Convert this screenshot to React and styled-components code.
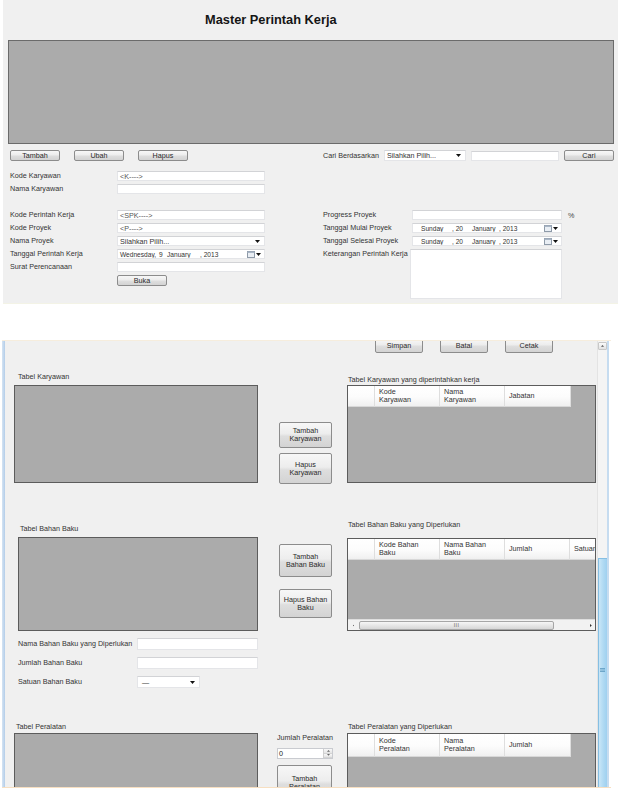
import React from 'react';
import styled, { createGlobalStyle } from 'styled-components';

const Global = createGlobalStyle`
  html, body { margin: 0; padding: 0; background: #fff; }
  body {
    font-family: "Liberation Sans", Arial, sans-serif;
    font-size: 7.2px;
    color: #2a2a2a;
  }
  * { box-sizing: border-box; }
`;

const Page = styled.div`
  width: 618px;
  height: 798px;
  overflow: hidden;
  background: #fff;
  display: flex;
  flex-direction: column;
`;

/* ---------- top screenshot ---------- */
const TopForm = styled.div`
  margin-left: 3px;
  width: 615px;
  height: 304px;
  flex-shrink: 0;
  background: #f0f0f0;
  border-bottom: 1px solid #f3f3e6;
  display: flex;
  flex-direction: column;
  overflow: hidden;
`;

const Title = styled.div`
  height: 40px;
  line-height: 40px;
  padding-left: 202px;
  font-size: 12.8px;
  font-weight: bold;
  color: #151515;
`;

const Banner = styled.div`
  margin-left: 5px;
  width: 606px;
  height: 104px;
  background: #ababab;
  border: 1px solid #6b6b6b;
`;

const FormBody = styled.div`
  display: flex;
  padding-left: 7px;
`;

const Column = styled.div`
  display: flex;
  flex-direction: column;
  width: ${(p) => p.$w}px;
  margin-left: ${(p) => p.$ml || 0}px;
`;

const ButtonRow = styled.div`
  display: flex;
  align-items: center;
  gap: ${(p) => p.$gap}px;
  margin-top: ${(p) => p.$mt || 0}px;
  margin-left: ${(p) => p.$ml || 0}px;
  height: ${(p) => p.$h}px;
`;

const Btn = styled.div`
  width: ${(p) => p.$w}px;
  height: ${(p) => p.$h}px;
  flex-shrink: 0;
  border: 1px solid #8c8c8c;
  border-radius: 2px;
  background: linear-gradient(#f7f7f7, #ededed 45%, #dedede 55%, #d3d3d3);
  display: flex;
  align-items: center;
  justify-content: center;
  text-align: center;
  line-height: 8px;
  color: #2a2a2a;
`;

const Group = styled.div`
  display: flex;
  flex-direction: column;
  gap: ${(p) => p.$gap}px;
  margin-top: ${(p) => p.$mt || 0}px;
`;

const Field = styled.div`
  display: grid;
  grid-template-columns: ${(p) => p.$label}px ${(p) => p.$ctrl}px auto;
  align-items: center;
  height: ${(p) => p.$h || 10}px;
`;

const Label = styled.div`
  line-height: 10px;
  white-space: nowrap;
  color: #333;
  padding-left: ${(p) => p.$pl || 0}px;
  align-self: ${(p) => (p.$top ? 'start' : 'auto')};
`;

const TextBox = styled.div`
  height: ${(p) => (p.$h ? `${p.$h}px` : '100%')};
  width: ${(p) => (p.$w ? `${p.$w}px` : 'auto')};
  flex-shrink: 0;
  background: #fff;
  border: 1px solid #e4e5e8;
  border-top-color: #d2d3d6;
  padding-left: 2px;
  display: flex;
  align-items: center;
  white-space: nowrap;
  overflow: hidden;
  color: #555;
`;

const Combo = styled(TextBox)`
  justify-content: space-between;
  padding-right: 4px;
  color: #333;
`;

const DateBox = styled(TextBox)`
  padding-right: 3px;
  color: #333;
  font-size: 6.6px;
`;

const Seg = styled.span`
  display: inline-block;
  width: ${(p) => p.$w}px;
  flex-shrink: 0;
`;

const DateIcons = styled.div`
  margin-left: auto;
  display: flex;
  align-items: center;
  gap: 1px;
`;

const Percent = styled.span`
  padding-left: 6px;
  color: #444;
`;

const Caret = () => (
  <svg width="5" height="3" viewBox="0 0 5 3">
    <path d="M0 0H5L2.5 3Z" fill="#111" />
  </svg>
);

const CalIcon = () => (
  <svg width="8" height="7" viewBox="0 0 8 7">
    <rect x="0.5" y="0.5" width="7" height="6" fill="#e9eef4" stroke="#8e9aa8" />
    <rect x="0.5" y="0.5" width="7" height="1.5" fill="#a9b6c6" />
  </svg>
);

const DatePicker = ({ segs }) => (
  <DateBox>
    {segs.map(([t, w], i) => (
      <Seg key={i} $w={w}>
        {t}
      </Seg>
    ))}
    <DateIcons>
      <CalIcon />
      <Caret />
    </DateIcons>
  </DateBox>
);

const TextArea = styled.div`
  height: 50px;
  background: #fff;
  border: 1px solid #e4e5e8;
  border-top-color: #d2d3d6;
`;

/* ---------- second screenshot ---------- */
const Window = styled.div`
  margin-top: 36px;
  margin-left: 2px;
  width: 609px;
  height: 447px;
  flex-shrink: 0;
  display: flex;
  border-top: 1px solid #f6eddd;
  overflow: hidden;
`;

const LeftFrame = styled.div`
  width: 3px;
  background: linear-gradient(90deg, #d5e4f3, #b3cde9);
`;

const Content = styled.div`
  width: 592px;
  background: #f0f0f0;
  display: flex;
  flex-direction: column;
  overflow: hidden;
`;

const VScroll = styled.div`
  width: 10px;
  background: #f4f4f4;
  border-left: 1px solid #e3e3e3;
  display: flex;
  flex-direction: column;
  align-items: center;
`;

const ScrollArrow = styled.div`
  width: 9px;
  height: 8px;
  margin-top: 1px;
  border: 1px solid #c8c8c8;
  border-radius: 1px;
  background: linear-gradient(#fbfbfb, #e2e2e2);
  display: flex;
  align-items: center;
  justify-content: center;
`;

const VThumb = styled.div`
  margin-top: auto;
  width: 10px;
  height: 229px;
  background: linear-gradient(90deg, #c9e6f7, #b1daf3 50%, #9fd0ef);
  border: 1px solid #86bfe3;
  border-bottom: none;
  display: flex;
  align-items: center;
  justify-content: center;
  padding-bottom: 6px;
`;

const RightFrame = styled.div`
  width: 2px;
  background: #c6dcf0;
`;

const BottomLine = styled.div`
  margin-left: 2px;
  width: 609px;
  height: 1px;
  background: #f7dfc1;
  flex-shrink: 0;
`;

const Section = styled.div`
  display: grid;
  grid-template-columns: 244px 75px 263px;
  padding-left: 9px;
  flex-shrink: 0;
`;

const Cell = styled.div`
  display: flex;
  flex-direction: column;
  align-items: flex-start;
  padding-top: ${(p) => p.$pt}px;
  padding-left: ${(p) => p.$pl || 0}px;
  gap: ${(p) => p.$gap || 0}px;
`;

const FieldStack = styled(Group)`
  align-self: stretch;
`;

const GridBox = styled.div`
  width: ${(p) => p.$w}px;
  height: ${(p) => p.$h}px;
  margin-left: ${(p) => p.$ml || 0}px;
  margin-top: ${(p) => p.$mt || 0}px;
  flex-shrink: 0;
  background: #ababab;
  border: 1px solid #5c5c5c;
  display: flex;
  flex-direction: column;
  overflow: hidden;
`;

const HeaderRow = styled.div`
  display: flex;
  height: ${(p) => p.$h}px;
  flex-shrink: 0;
`;

const HeadCell = styled.div`
  width: ${(p) => p.$w}px;
  flex-shrink: 0;
  height: 100%;
  background: linear-gradient(#ffffff, #fcfcfc 55%, #f0f0f0);
  border-right: 1px solid #dedede;
  border-bottom: 1px solid #d8d8d8;
  padding-left: 4px;
  display: flex;
  align-items: center;
  line-height: 8px;
  color: #333;
  white-space: pre;
`;

const HScroll = styled.div`
  margin-top: auto;
  height: 11px;
  flex-shrink: 0;
  display: flex;
  align-items: center;
  background: #f2f2f2;
  border-top: 1px solid #dedede;
`;

const HArrow = styled.div`
  width: ${(p) => p.$w}px;
  flex-shrink: 0;
  display: flex;
  align-items: center;
  justify-content: center;
`;

const HThumb = styled.div`
  width: 195px;
  height: 9px;
  flex-shrink: 0;
  border: 1px solid #a6a6a6;
  border-radius: 2px;
  background: linear-gradient(#f6f6f6, #e6e6e6 50%, #d6d6d6);
  display: flex;
  align-items: center;
  justify-content: center;
  font-size: 5px;
  letter-spacing: 0.5px;
  color: #555;
`;

const HTrack = styled.div`
  flex: 1;
`;

const Spin = styled.div`
  width: 56px;
  height: 11px;
  margin-top: 5px;
  flex-shrink: 0;
  background: #fff;
  border: 1px solid #c9cbd0;
  display: flex;
  align-items: center;
  padding-left: 1px;
  color: #222;
`;

const SpinBtns = styled.div`
  margin-left: auto;
  width: 9px;
  height: 100%;
  display: flex;
  flex-direction: column;
  border-left: 1px solid #d0d0d0;
`;

const SpinHalf = styled.div`
  flex: 1;
  background: linear-gradient(#f8f8f8, #e4e4e4);
  border-bottom: 1px solid #d4d4d4;
  display: flex;
  align-items: center;
  justify-content: center;
`;

const TallBtn = styled(Btn)`
  margin-top: 6px;
`;

const Tri = ({ dir = 'down', size = 4, color = '#333' }) => {
  const h = size * 0.6;
  if (dir === 'left' || dir === 'right') {
    const d = dir === 'left' ? `M${h} 0V${size}L0 ${size / 2}Z` : `M0 0V${size}L${h} ${size / 2}Z`;
    return (
      <svg width={h} height={size} viewBox={`0 0 ${h} ${size}`}>
        <path d={d} fill={color} />
      </svg>
    );
  }
  const d = dir === 'up' ? `M0 ${h}H${size}L${size / 2} 0Z` : `M0 0H${size}L${size / 2} ${h}Z`;
  return (
    <svg width={size} height={h} viewBox={`0 0 ${size} ${h}`}>
      <path d={d} fill={color} />
    </svg>
  );
};

const Grip = () => (
  <svg width="5" height="4" viewBox="0 0 5 4">
    <path d="M0 0.5H5M0 2H5M0 3.5H5" stroke="#4f8fb8" strokeWidth="0.7" />
  </svg>
);

const DataGrid = ({ w, h, headH, cols, hscroll }) => (
  <GridBox $w={w} $h={h}>
    <HeaderRow $h={headH}>
      {cols.map(([t, cw], i) => (
        <HeadCell key={i} $w={cw}>
          {t}
        </HeadCell>
      ))}
    </HeaderRow>
    {hscroll && (
      <HScroll>
        <HArrow $w={11}>
          <Tri dir="left" size={3} />
        </HArrow>
        <HThumb>III</HThumb>
        <HTrack />
        <HArrow $w={8}>
          <Tri dir="right" size={3} />
        </HArrow>
      </HScroll>
    )}
  </GridBox>
);

const rightDate = [
  ['', 6],
  ['Sunday', 31],
  [', 20', 20],
  ['January', 27],
  [', 2013', 30],
];

export default function App() {
  return (
    <Page>
      <Global />
      <TopForm>
        <Title>Master Perintah Kerja</Title>
        <Banner />
        <FormBody>
          <Column $w={255}>
            <ButtonRow $gap={14} $mt={6} $h={11}>
              <Btn $w={50} $h={11}>Tambah</Btn>
              <Btn $w={50} $h={11}>Ubah</Btn>
              <Btn $w={50} $h={11}>Hapus</Btn>
            </ButtonRow>
            <Group $gap={3} $mt={10}>
              <Field $label={107} $ctrl={148}>
                <Label>Kode Karyawan</Label>
                <TextBox>{'<K---->'}</TextBox>
              </Field>
              <Field $label={107} $ctrl={148}>
                <Label>Nama Karyawan</Label>
                <TextBox />
              </Field>
            </Group>
            <Group $gap={3} $mt={16}>
              <Field $label={107} $ctrl={148}>
                <Label>Kode Perintah Kerja</Label>
                <TextBox>{'<SPK---->'}</TextBox>
              </Field>
              <Field $label={107} $ctrl={148}>
                <Label>Kode Proyek</Label>
                <TextBox>{'<P---->'}</TextBox>
              </Field>
              <Field $label={107} $ctrl={148}>
                <Label>Nama Proyek</Label>
                <Combo>
                  <span>Silahkan Pilih...</span>
                  <Caret />
                </Combo>
              </Field>
              <Field $label={107} $ctrl={148}>
                <Label>Tanggal Perintah Kerja</Label>
                <DatePicker
                  segs={[
                    ['Wednesday,', 39],
                    ['9', 8],
                    ['January', 33],
                    [', 2013', 30],
                  ]}
                />
              </Field>
              <Field $label={107} $ctrl={148}>
                <Label>Surat Perencanaan</Label>
                <TextBox />
              </Field>
            </Group>
            <ButtonRow $gap={0} $mt={3} $ml={107} $h={11}>
              <Btn $w={50} $h={11}>Buka</Btn>
            </ButtonRow>
          </Column>
          <Column $w={295} $ml={58}>
            <ButtonRow $gap={5} $mt={6} $h={11}>
              <Label>Cari Berdasarkan</Label>
              <Combo $h={11} $w={82}>
                <span>Silahkan Pilih...</span>
                <Caret />
              </Combo>
              <TextBox $h={10} $w={88} />
              <Btn $w={50} $h={11}>Cari</Btn>
            </ButtonRow>
            <Group $gap={3} $mt={49}>
              <Field $label={89} $ctrl={150}>
                <Label>Progress Proyek</Label>
                <TextBox />
                <Percent>%</Percent>
              </Field>
              <Field $label={89} $ctrl={150}>
                <Label>Tanggal Mulai Proyek</Label>
                <DatePicker segs={rightDate} />
              </Field>
              <Field $label={89} $ctrl={150}>
                <Label>Tanggal Selesai Proyek</Label>
                <DatePicker segs={rightDate} />
              </Field>
              <Field $label={87} $ctrl={152} $h={50}>
                <Label $top>Keterangan Perintah Kerja</Label>
                <TextArea />
              </Field>
            </Group>
          </Column>
        </FormBody>
      </TopForm>

      <Window>
        <LeftFrame />
        <Content>
          <ButtonRow $gap={17} $mt={-3} $ml={370} $h={15}>
            <Btn $w={48} $h={15}>Simpan</Btn>
            <Btn $w={48} $h={15}>Batal</Btn>
            <Btn $w={48} $h={15}>Cetak</Btn>
          </ButtonRow>

          <Section>
            <Cell $pt={19} $gap={3}>
              <Label $pl={4}>Tabel Karyawan</Label>
              <GridBox $w={244} $h={98} />
            </Cell>
            <Cell $pt={69} $pl={21} $gap={5}>
              <Btn $w={53} $h={26}>Tambah<br />Karyawan</Btn>
              <Btn $w={53} $h={31}>Hapus<br />Karyawan</Btn>
            </Cell>
            <Cell $pt={22} $pl={14}>
              <Label $pl={1}>Tabel Karyawan yang diperintahkan kerja</Label>
              <DataGrid
                w={249}
                h={98}
                headH={21}
                cols={[
                  ['', 27],
                  ['Kode\nKaryawan', 65],
                  ['Nama\nKaryawan', 65],
                  ['Jabatan', 66],
                ]}
              />
            </Cell>
          </Section>

          <Section>
            <Cell $pt={40}>
              <Label $pl={6}>Tabel Bahan Baku</Label>
              <GridBox $w={240} $h={94} $ml={4} $mt={3} />
              <FieldStack $gap={7} $mt={7}>
                <Field $label={123} $ctrl={121} $h={12}>
                  <Label $pl={4}>Nama Bahan Baku yang Diperlukan</Label>
                  <TextBox />
                </Field>
                <Field $label={123} $ctrl={121} $h={12}>
                  <Label $pl={4}>Jumlah Bahan Baku</Label>
                  <TextBox />
                </Field>
                <Field $label={123} $ctrl={63} $h={12}>
                  <Label $pl={4}>Satuan Bahan Baku</Label>
                  <Combo>
                    <span>&nbsp;—</span>
                    <Caret />
                  </Combo>
                </Field>
              </FieldStack>
            </Cell>
            <Cell $pt={60} $pl={21} $gap={12}>
              <Btn $w={53} $h={33}>Tambah<br />Bahan Baku</Btn>
              <Btn $w={53} $h={29}>Hapus Bahan<br />Baku</Btn>
            </Cell>
            <Cell $pt={36} $pl={14} $gap={8}>
              <Label $pl={1}>Tabel Bahan Baku yang Diperlukan</Label>
              <DataGrid
                w={249}
                h={93}
                headH={21}
                hscroll
                cols={[
                  ['', 27],
                  ['Kode Bahan\nBaku', 65],
                  ['Nama Bahan\nBaku', 65],
                  ['Jumlah', 65],
                  ['Satuan', 60],
                ]}
              />
            </Cell>
          </Section>

          <Section>
            <Cell $pt={34} $gap={1}>
              <Label $pl={2}>Tabel Peralatan</Label>
              <GridBox $w={244} $h={110} />
            </Cell>
            <Cell $pt={45} $pl={19}>
              <Label>Jumlah Peralatan</Label>
              <Spin>
                0
                <SpinBtns>
                  <SpinHalf>
                    <Tri dir="up" size={3} color="#666" />
                  </SpinHalf>
                  <SpinHalf>
                    <Tri dir="down" size={3} color="#666" />
                  </SpinHalf>
                </SpinBtns>
              </Spin>
              <TallBtn $w={55} $h={35}>Tambah<br />Peralatan</TallBtn>
            </Cell>
            <Cell $pt={34} $pl={14} $gap={1}>
              <Label $pl={1}>Tabel Peralatan yang Diperlukan</Label>
              <DataGrid
                w={249}
                h={110}
                headH={23}
                cols={[
                  ['', 27],
                  ['Kode\nPeralatan', 65],
                  ['Nama\nPeralatan', 65],
                  ['Jumlah', 66],
                ]}
              />
            </Cell>
          </Section>
        </Content>
        <VScroll>
          <ScrollArrow>
            <Tri dir="up" size={3} color="#555" />
          </ScrollArrow>
          <VThumb>
            <Grip />
          </VThumb>
        </VScroll>
        <RightFrame />
      </Window>
      <BottomLine />
    </Page>
  );
}
